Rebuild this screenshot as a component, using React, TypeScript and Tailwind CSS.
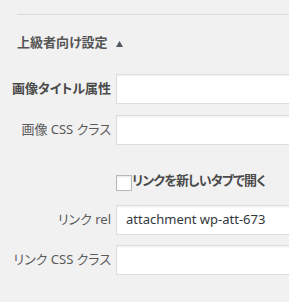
const jp = "font-['Segoe_UI','Noto_Sans','Noto_Sans_CJK_JP',sans-serif] [font-feature-settings:'palt']"

function Row({ label, bold, value }: { label: React.ReactNode; bold?: boolean; value?: string }) {
  return (
    <div className="flex items-center h-[30px]">
      <div
        className={`w-[116px] shrink-0 pr-[5px] text-right text-[13px] whitespace-nowrap ${
          bold ? 'font-bold text-[#4a4a4a]' : 'text-[#5a5a5a]'
        }`}
      >
        {label}
      </div>
      <div className="w-[220px] shrink-0 h-[30px] bg-white border border-[#ddd] shadow-[inset_0_1px_2px_rgba(0,0,0,0.07)] flex items-center pl-[9px] text-[13px] text-[#32373c] font-['Noto_Sans',sans-serif]">
        {value}
      </div>
    </div>
  )
}

export default function App() {
  return (
    <div className={`w-[289px] h-[302px] overflow-hidden bg-[#f1f1f1] ${jp}`}>
      {/* 区切り線 */}
      <div className="pt-[14px] pl-[17px]">
        <div className="h-px bg-[#dcdcdc]" />
      </div>

      {/* 見出し */}
      <div className="flex items-center gap-[8px] pl-[17px] mt-[19px] h-[18px] text-[13px] font-bold text-[#555]">
        <span>上級者向け設定</span>
        <svg width="7" height="6" viewBox="0 0 7 6" className="mt-[2px]">
          <path d="M3.5 0 L7 6 L0 6 Z" fill="#50575e" />
        </svg>
      </div>

      <div className="mt-[22px] flex flex-col gap-[11px]">
        <Row label="画像タイトル属性" bold />
        <Row label="画像 CSS クラス" />
      </div>

      {/* チェックボックス */}
      <div className="flex items-center mt-[30px] pl-[116px] h-[16px]">
        <div className="w-[16px] h-[16px] bg-white border border-[#b4b9be] shadow-[inset_0_1px_2px_rgba(0,0,0,0.1)]" />
        <span className="text-[13px] font-bold text-[#4a4a4a] tracking-[-0.8px] whitespace-nowrap -mt-[4px]">リンクを新しいタブで開く</span>
      </div>

      <div className="mt-[14px] flex flex-col gap-[10px]">
        <Row label="リンク rel" value="attachment wp-att-673" />
        <Row label="リンク CSS クラス" />
      </div>
    </div>
  )
}
